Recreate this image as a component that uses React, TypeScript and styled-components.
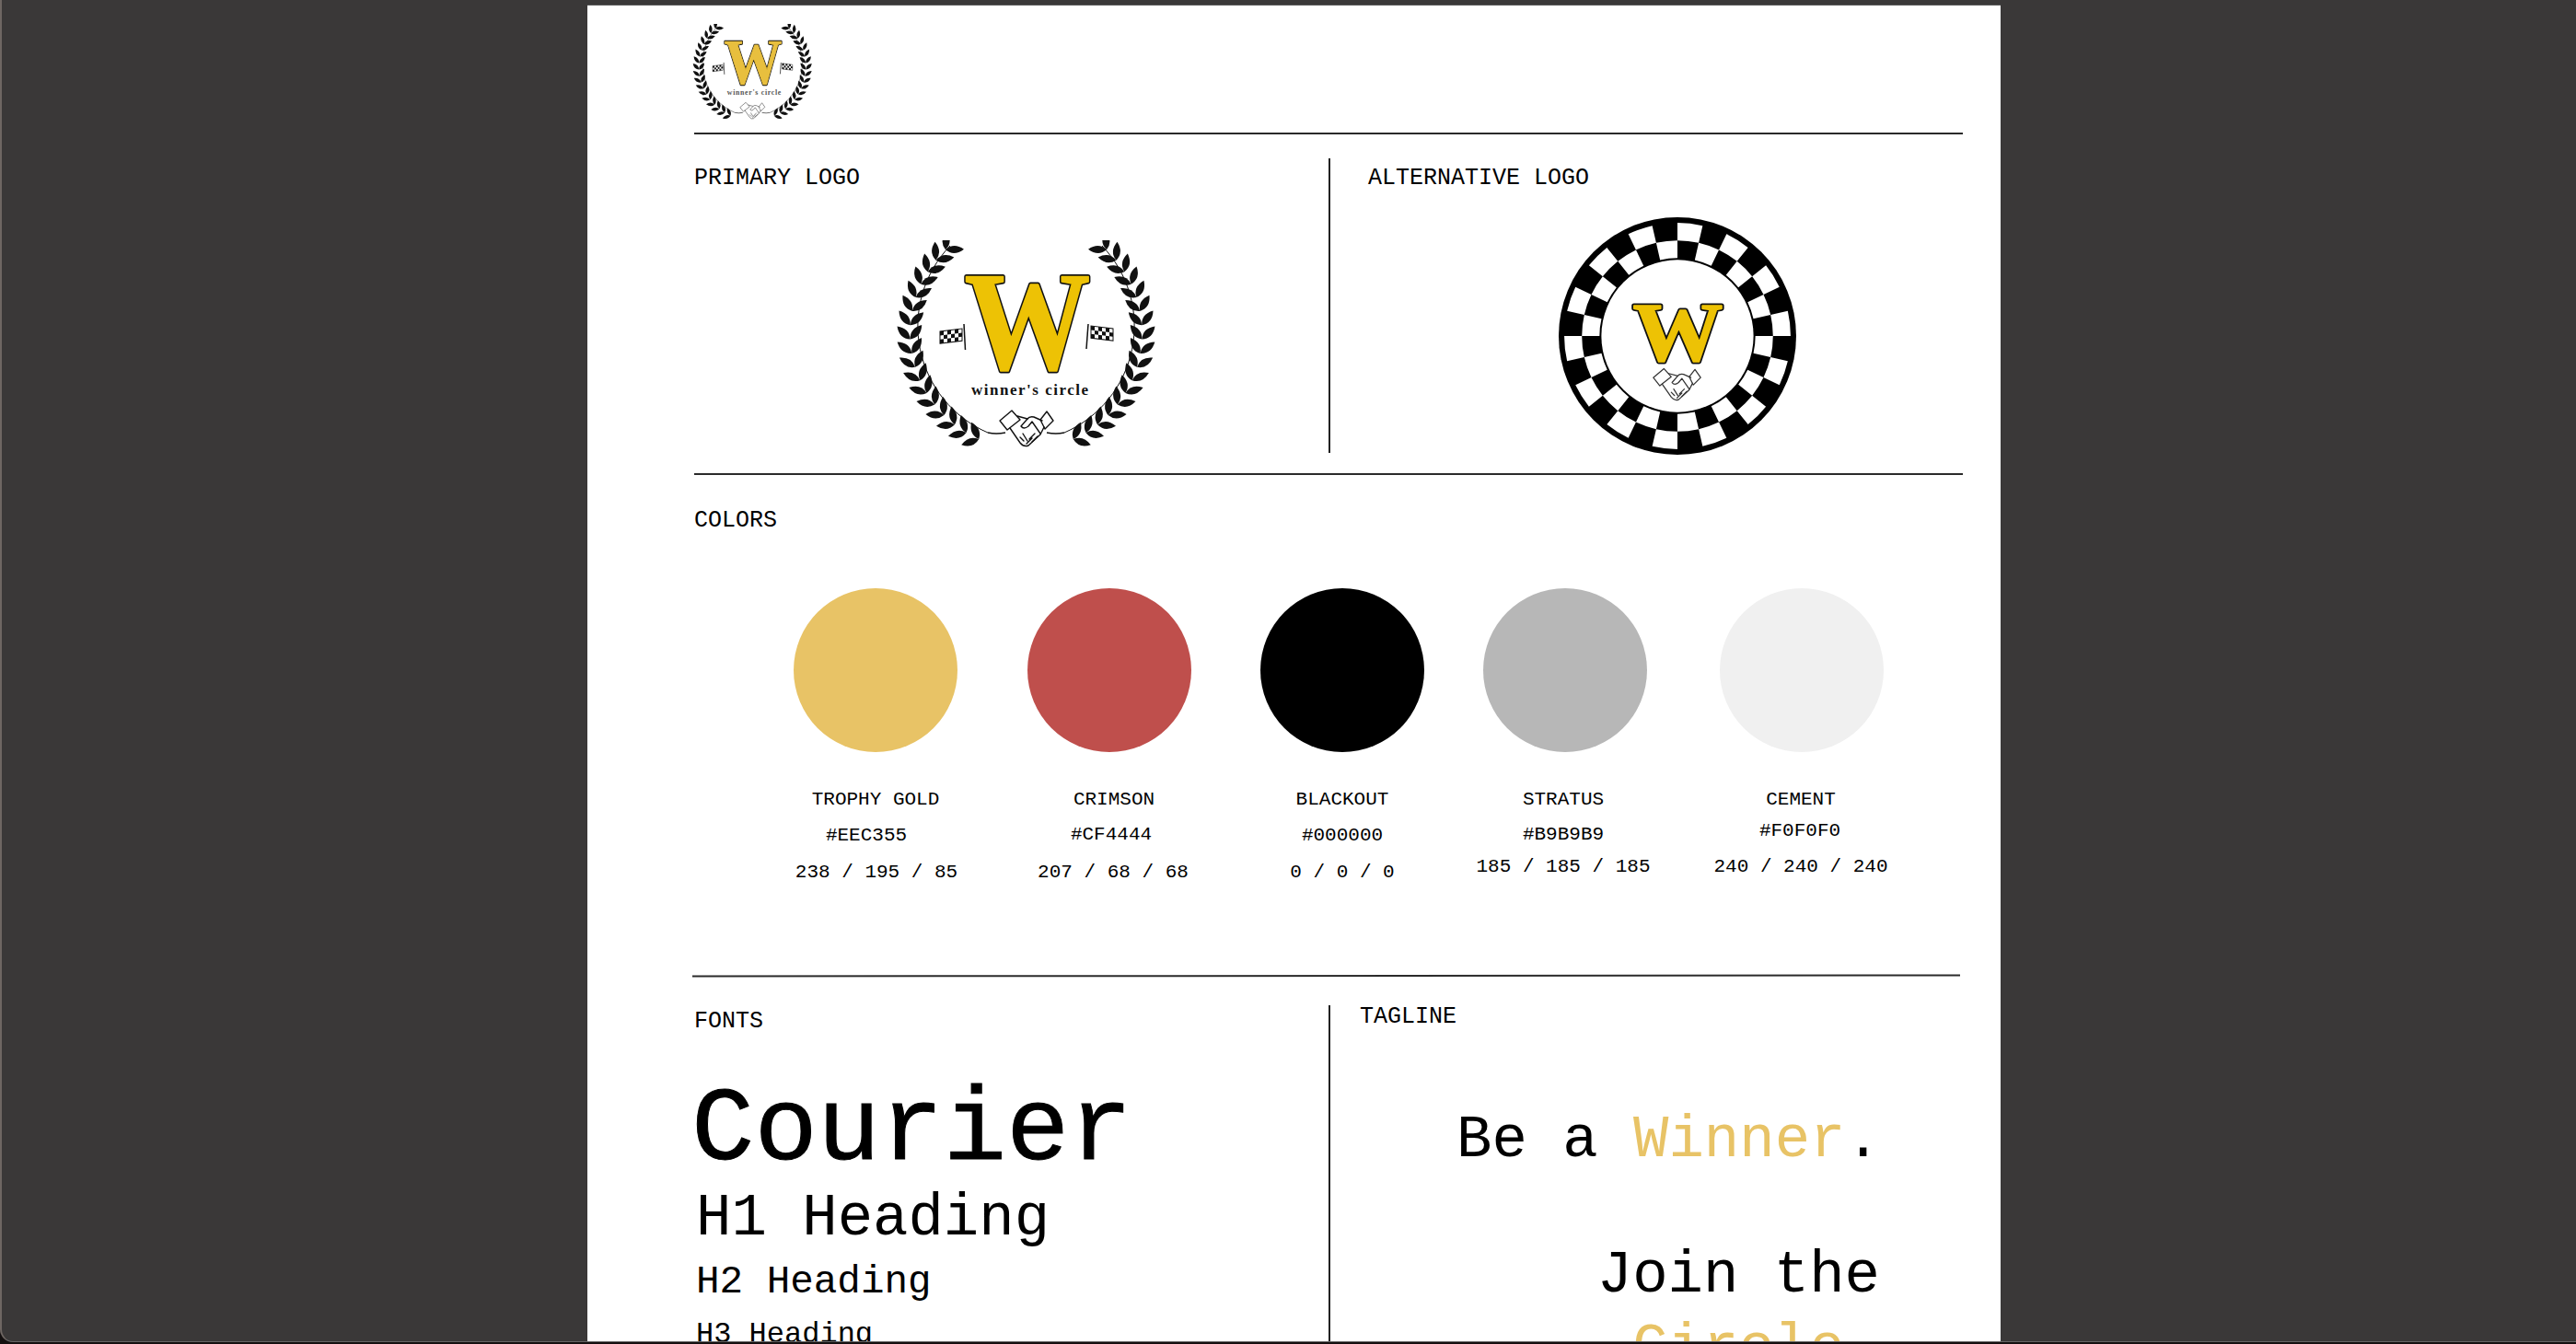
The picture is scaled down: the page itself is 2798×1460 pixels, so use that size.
import React from 'react';
import styled, { createGlobalStyle } from 'styled-components';

const swatches = [
  { name: 'TROPHY GOLD', hex: '#EEC355', rgb: '238 / 195 / 85', color: '#E8C366', gap: 77, nameShift: 0, hexShift: -10, rgbShift: 1, hexGap: 13, rgbGap: 14 },
  { name: 'CRIMSON', hex: '#CF4444', rgb: '207 / 68 / 68', color: '#BF4F4C', gap: 14, nameShift: 5, hexShift: 2, rgbShift: 4, hexGap: 12, rgbGap: 15 },
  { name: 'BLACKOUT', hex: '#000000', rgb: '0 / 0 / 0', color: '#000000', gap: 13, nameShift: 0, hexShift: 0, rgbShift: 0, hexGap: 13, rgbGap: 14 },
  { name: 'STRATUS', hex: '#B9B9B9', rgb: '185 / 185 / 185', color: '#B7B7B7', gap: 2, nameShift: -2, hexShift: -2, rgbShift: -2, hexGap: 12, rgbGap: 9 },
  { name: 'CEMENT', hex: '#F0F0F0', rgb: '240 / 240 / 240', color: '#F0F0F0', gap: 17, nameShift: -1, hexShift: -2, rgbShift: -1, hexGap: 8, rgbGap: 13 },
];

// leaves of one laurel branch, walking up the left side of the wreath
const CX = 174.5;
const CY = 123;
const R = 126;
const leaves: { x: number; y: number; rot: number }[] = [];
for (let deg = 24; deg <= 136; deg += 7) {
  const a = (deg * Math.PI) / 180;
  const x = CX - R * Math.sin(a);
  const y = CY + R * Math.cos(a);
  const heading = (Math.atan2(-Math.sin(a), -Math.cos(a)) * 180) / Math.PI;
  leaves.push({ x, y, rot: heading - 42 });
  leaves.push({ x, y, rot: heading + 42 });
}

const polar = (r: number, deg: number) => {
  const a = (deg * Math.PI) / 180;
  return `${130 + r * Math.sin(a)} ${130 - r * Math.cos(a)}`;
};
const cell = (r0: number, r1: number, d0: number, d1: number) =>
  `M${polar(r0, d0)}L${polar(r1, d0)}A${r1} ${r1} 0 0 1 ${polar(r1, d1)}L${polar(r0, d1)}A${r0} ${r0} 0 0 0 ${polar(r0, d0)}Z`;
const STEP = 360 / 28;

function Flag({ matrix }: { matrix: string }) {
  const cells = [];
  for (let col = 0; col < 6; col++) {
    for (let row = 0; row < 3; row++) {
      if ((col + row) % 2 === 0) cells.push(<rect key={`${col}-${row}`} x={col} y={row} width={1} height={1} fill="#111" />);
    }
  }
  return (
    <g transform={matrix}>
      <rect width={6} height={3} fill="#fff" stroke="#111" strokeWidth={0.25} />
      {cells}
    </g>
  );
}

function LogoW({ x, y, size, sx, gold }: { x: number; y: number; size: number; sx: number; gold: string }) {
  const letter = (stroke: string, strokeWidth: number) => (
    <text
      transform={`translate(${x} ${y}) scale(${sx} 1)`}
      textAnchor="middle"
      fontFamily="'Liberation Serif', serif"
      fontWeight={700}
      fontSize={size}
      fill={gold}
      stroke={stroke}
      strokeWidth={strokeWidth}
      strokeLinejoin="round"
    >
      W
    </text>
  );
  return (
    <>
      {letter('#111', 5)}
      {letter(gold, 1.6)}
    </>
  );
}

// two hands with tilted cuffs, drawn in the wreath's own coordinates
function Shake({ ink, transform }: { ink: string; transform?: string }) {
  return (
    <g transform={transform} fill="none" stroke={ink} strokeWidth={1.4} strokeLinejoin="round" strokeLinecap="round">
      <path d="M146 218L159 207L168 217L154 228Z" fill="#fff" />
      <path d="M190 217L197 208L204 218L195 227Z" fill="#fff" />
      <path d="M157 226L168 242Q172 247 177 245L190 233L194 225" fill="#fff" />
      <path d="M165 213L176 216L169 224Q172 228 177 224L181 219L190 232" />
      <path d="M192 218L183 214Q178 213 176 216" />
      <path d="M168 236L172 240M171 232L176 240M178 238L184 232M181 241L187 235M175 243L181 237" />
    </g>
  );
}

function Wreath({ width, gold, ink }: { width: number; gold: string; ink: string }) {
  const branch = (
    <g fill="#111">
      {leaves.map((l, i) => (
        <path key={i} transform={`translate(${l.x} ${l.y}) rotate(${l.rot})`} d="M0 0Q9 -8 20 0Q9 8 0 0Z" />
      ))}
      <path d="M133 231A126 126 0 0 1 92 28" fill="none" stroke="#111" strokeWidth={1} />
      <path d="M133 231Q142 233 152 231" fill="none" stroke="#111" strokeWidth={1.3} />
    </g>
  );
  return (
    <Emblem viewBox="33 22 282 225" $width={width}>
      {branch}
      <g transform={`translate(${CX * 2} 0) scale(-1 1)`}>{branch}</g>
      <LogoW x={176} y={162} size={152} sx={0.9} gold={gold} />
      <Flag matrix="matrix(4 -0.5 0 4.4 81 121)" />
      <line x1={107} y1={113} x2={108.5} y2={141} stroke="#111" strokeWidth={1.5} />
      <Flag matrix="matrix(4 0.5 0 4.4 245 115)" />
      <line x1={242} y1={113} x2={240} y2={140} stroke="#111" strokeWidth={1.5} />
      <WreathText x={115} y={190} fontSize={17} textLength={127} fill={ink}>
        winner's circle
      </WreathText>
      <Shake ink={ink} />
    </Emblem>
  );
}

function RingLogo({ width }: { width: number }) {
  const squares = [];
  for (let i = 0; i < 14; i++) {
    const start = i * STEP * 2;
    squares.push(<path key={`o${i}`} d={cell(103, 122, start, start + STEP)} fill="#fff" />);
    squares.push(<path key={`i${i}`} d={cell(84, 103, start + STEP, start + STEP * 2)} fill="#fff" />);
  }
  return (
    <Emblem viewBox="0 0 260 260" $width={width}>
      <circle cx={130} cy={130} r={128} fill="#000" />
      {squares}
      <circle cx={130} cy={130} r={82} fill="#fff" />
      <LogoW x={130.5} y={157} size={90} sx={1.08} gold="#EDC205" />
      <Shake ink="#333" transform="translate(-24.5 -17) scale(0.88)" />
    </Emblem>
  );
}

export default function App() {
  return (
    <Desktop>
      <GlobalStyle />
      <Sheet>
        <Header>
          <Wreath width={130} gold="#E8BF3E" ink="#555" />
        </Header>
        <Rule />
        <LogoSection>
          <LeftColumn>
            <Label>PRIMARY LOGO</Label>
            <PrimarySlot>
              <Wreath width={282} gold="#EDC205" ink="#111" />
            </PrimarySlot>
          </LeftColumn>
          <RightColumn $pad={41}>
            <Label>ALTERNATIVE LOGO</Label>
            <AltSlot>
              <RingLogo width={262} />
            </AltSlot>
          </RightColumn>
        </LogoSection>
        <Rule $top={22} />
        <Label $top={35}>COLORS</Label>
        <SwatchRow>
          {swatches.map((s) => (
            <Swatch key={s.name} $gap={s.gap}>
              <Dot $color={s.color} />
              <SwatchName $shift={s.nameShift}>{s.name}</SwatchName>
              <SwatchValue $shift={s.hexShift} $top={s.hexGap}>{s.hex}</SwatchValue>
              <SwatchValue $shift={s.rgbShift} $top={s.rgbGap}>{s.rgb}</SwatchValue>
            </Swatch>
          ))}
        </SwatchRow>
        <TiltedRule />
        <LowerSection>
          <LeftColumn>
            <Label $top={3}>FONTS</Label>
            <FontTitle>Courier</FontTitle>
            <Heading $size={64} $top={6}>H1 Heading</Heading>
            <Heading $size={42.6} $top={16}>H2 Heading</Heading>
            <Heading $size={32} $top={19}>H3 Heading</Heading>
          </LeftColumn>
          <RightColumn $pad={32}>
            <Label $top={-2}>TAGLINE</Label>
            <TaglineOne>
              Be a <Accent>Winner</Accent>.
            </TaglineOne>
            <TaglineTwo>
              Join the
              <br />
              <Accent>Circle</Accent>.
            </TaglineTwo>
          </RightColumn>
        </LowerSection>
      </Sheet>
    </Desktop>
  );
}

const GlobalStyle = createGlobalStyle`
  html, body {
    margin: 0;
    height: 100%;
    overflow: hidden;
    background: #141010;
  }
`;

const Desktop = styled.div`
  box-sizing: border-box;
  height: 1458px;
  padding: 5px 0 0 636px;
  background: #3a3838;
  border-left: 2px solid #6e6662;
  border-bottom: 1px solid #666;
  border-bottom-left-radius: 14px;
  font-family: 'Liberation Mono', 'Courier New', monospace;
  color: #000;
  overflow: hidden;
`;

const Sheet = styled.div`
  box-sizing: border-box;
  width: 1535px;
  height: 1453px;
  padding-left: 116px;
  padding-right: 41px;
  background: #fff;
  border-top: 1px solid #5a5a5a;
  overflow: hidden;
`;

const Header = styled.div`
  height: 138px;
  padding-top: 20px;
  box-sizing: border-box;
  margin-left: -2px;
`;

const Rule = styled.div<{ $top?: number }>`
  height: 2px;
  background: #2a2a2a;
  margin-top: ${(p) => p.$top ?? 0}px;
`;

const TiltedRule = styled.div`
  height: 2px;
  background: #2a2a2a;
  margin: 60px 3px 0 -2px;
  transform: rotate(-0.05deg);
`;

const LogoSection = styled.div`
  display: flex;
  height: 320px;
  margin-top: 26px;
`;

const LowerSection = styled.div`
  display: flex;
  height: 400px;
  margin-top: 31px;
`;

const LeftColumn = styled.div`
  width: 689px;
  flex-shrink: 0;
`;

const RightColumn = styled.div<{ $pad: number }>`
  flex: 1;
  border-left: 2px solid #222;
  padding-left: ${(p) => p.$pad}px;
`;

const Label = styled.div<{ $top?: number }>`
  font-size: 25px;
  line-height: 30px;
  margin-top: ${(p) => p.$top ?? 7}px;
`;

const PrimarySlot = styled.div`
  margin: 52px 0 0 219px;
`;

const AltSlot = styled.div`
  margin: 25px 0 0 205px;
`;

const Emblem = styled.svg<{ $width: number }>`
  display: block;
  width: ${(p) => p.$width}px;
  height: auto;
`;

const WreathText = styled.text`
  font-family: 'Liberation Serif', serif;
  font-weight: 700;
`;

const SwatchRow = styled.div`
  display: flex;
  height: 360px;
  margin-top: 58px;
`;

const Swatch = styled.div<{ $gap: number }>`
  width: 240px;
  flex-shrink: 0;
  margin-left: ${(p) => p.$gap}px;
  display: flex;
  flex-direction: column;
  align-items: center;
`;

const Dot = styled.div<{ $color: string }>`
  width: 178px;
  height: 178px;
  border-radius: 50%;
  background: ${(p) => p.$color};
`;

const SwatchName = styled.div<{ $shift: number }>`
  font-size: 21px;
  line-height: 26px;
  white-space: nowrap;
  margin-top: 39px;
  margin-left: ${(p) => p.$shift * 2}px;
`;

const SwatchValue = styled.div<{ $shift: number; $top: number }>`
  font-size: 21px;
  line-height: 26px;
  white-space: nowrap;
  margin-top: ${(p) => p.$top}px;
  margin-left: ${(p) => p.$shift * 2}px;
`;

const FontTitle = styled.div`
  font-size: 114px;
  line-height: 1;
  margin: 47px 0 0 -3px;
  -webkit-text-stroke: 1px #000;
`;

const Heading = styled.div<{ $size: number; $top: number }>`
  font-size: ${(p) => p.$size}px;
  line-height: 1;
  margin-top: ${(p) => p.$top}px;
  margin-left: 2px;
`;

const TaglineOne = styled.div`
  font-size: 64px;
  line-height: 1;
  margin: 87px 0 0 105px;
`;

const TaglineTwo = styled.div`
  font-size: 64px;
  line-height: 79px;
  text-align: right;
  margin: 76px 90px 0 0;
`;

const Accent = styled.span`
  color: #e8c366;
`;
